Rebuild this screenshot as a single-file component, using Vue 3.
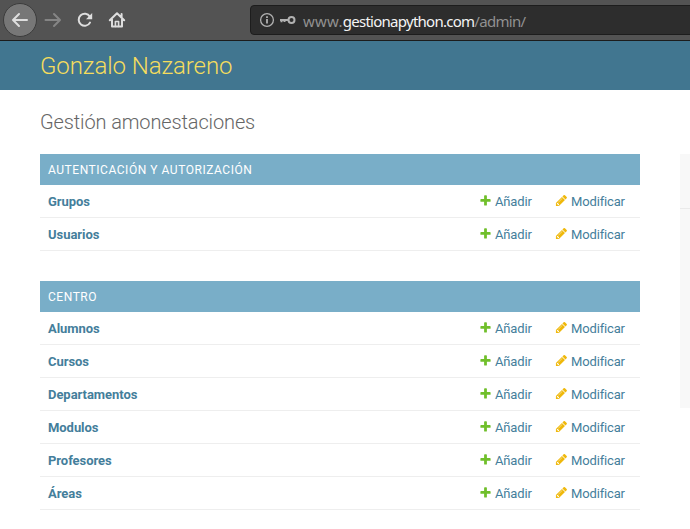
<script setup>
const apps = [
  { name: 'Autenticación y autorización', models: ['Grupos', 'Usuarios'] },
  { name: 'Centro', models: ['Alumnos', 'Cursos', 'Departamentos', 'Modulos', 'Profesores', 'Áreas'] },
]
</script>

<template>
  <div class="window">
    <nav class="toolbar">
      <button class="tool back" aria-label="Atrás">
        <svg width="20" height="20" viewBox="0 0 20 20"><path d="M17 10H3.500M9 4L3 10l6 6" /></svg>
      </button>
      <button class="tool forward" aria-label="Adelante">
        <svg width="20" height="20" viewBox="0 0 20 20"><path d="M2.500 10h14M11 4l6 6-6 6" /></svg>
      </button>
      <button class="tool reload" aria-label="Recargar">
        <svg width="20" height="20" viewBox="0 0 20 20"><path d="M15 12.600A6 6 0 1 1 14.800 6.600" /><path class="tip" d="M17.200 3v6.200h-6.200z" /></svg>
      </button>
      <button class="tool home" aria-label="Inicio">
        <svg width="20" height="20" viewBox="0 0 20 20">
          <path d="M2.800 10.200L10 3.200l7.200 7M5 9.500v7h10v-7M14.600 4v3" />
          <path class="door" d="M8.400 16.500v-5h3.200v5" />
        </svg>
      </button>
      <div class="address">
        <svg class="info" width="16" height="16" viewBox="0 0 16 16">
          <circle cx="8" cy="8" r="6.400" /><path class="stem" d="M8 7v4.500M8 4.200v1.700" />
        </svg>
        <svg class="key" width="17" height="12" viewBox="0 0 17 12">
          <circle cx="12.500" cy="6" r="3" /><path d="M9.500 6H1M2.500 6v2.200M5.500 6v2" />
        </svg>
        <span class="url"><span class="sub">www.</span><b>gestionapython.com</b>/admin/</span>
      </div>
    </nav>
    <header class="header">Gonzalo Nazareno</header>
    <main class="content">
      <h1>Gestión amonestaciones</h1>
      <div class="columns">
        <div class="apps">
          <section v-for="app in apps" :key="app.name" class="module">
            <h2>{{ app.name }}</h2>
            <div v-for="model in app.models" :key="model" class="row">
              <a class="model">{{ model }}</a>
              <a class="add">
                <svg width="13" height="13" viewBox="0 0 1792 1792"><path fill="#70bf2b" d="M1600 796v192q0 40-28 68t-68 28h-416v416q0 40-28 68t-68 28h-192q-40 0-68-28t-28-68v-416h-416q-40 0-68-28t-28-68v-192q0-40 28-68t68-28h416v-416q0-40 28-68t68-28h192q40 0 68 28t28 68v416h416q40 0 68 28t28 68z" /></svg>
                Añadir
              </a>
              <a class="change">
                <svg width="13" height="13" viewBox="0 0 1792 1792"><path fill="#efb80b" d="M491 1536l91-91-235-235-91 91v107h128v128h107zm523-928q0-22-22-22-10 0-17 7l-542 542q-7 7-7 17 0 22 22 22 10 0 17-7l542-542q7-7 7-17zm-54-192l416 416-832 832h-416v-416zm683 96q0 53-37 90l-166 166-416-416 166-165q36-38 90-38 53 0 91 38l235 234q37 39 37 91z" /></svg>
                Modificar
              </a>
            </div>
          </section>
        </div>
        <aside class="recent"><div class="recent-head"></div></aside>
      </div>
    </main>
  </div>
</template>

<style>
body { background: #fff; overflow: hidden; }
</style>

<style scoped>
.window {
  width: 690px;
  height: 529px;
  overflow: hidden;
  font-family: Roboto, "Liberation Sans", sans-serif;
  background: #fff;
}
.toolbar {
  box-sizing: border-box;
  height: 41px;
  display: flex;
  align-items: center;
  padding-left: 3px;
  background: #535353;
  border-bottom: 1px solid #1c1c1c;
}
.tool {
  box-sizing: border-box;
  flex: none;
  display: flex;
  align-items: center;
  justify-content: center;
  width: 32px;
  height: 32px;
  padding: 0;
  border: 0;
  background: none;
}
.tool svg { fill: none; stroke: #dedede; stroke-width: 2; stroke-linecap: round; stroke-linejoin: round; }
.back {
  width: 34px;
  height: 34px;
  border: 1px solid #3c3c3c;
  border-radius: 50%;
  background: #777;
}
.forward svg { stroke: #858585; }
.tool .tip { fill: #dedede; stroke: none; }
.tool .door { stroke-width: 1.600; }
.address {
  box-sizing: border-box;
  flex: none;
  width: 470px;
  height: 30px;
  margin-left: 117px;
  padding-left: 8px;
  display: flex;
  align-items: center;
  border: 1px solid #1d1d1d;
  border-radius: 4px;
  background: #2d2d2d;
}
.info { fill: none; stroke: #b1b1b1; stroke-width: 1.300; }
.stem { stroke-width: 1.800; }
.key { margin-left: 4px; fill: none; stroke: #b1b1b1; stroke-width: 2; }
.url {
  margin-left: 7px;
  padding-top: 1px;
  font: 15px/20px "Noto Sans", sans-serif;
  letter-spacing: -0.700px;
  color: #919191;
  white-space: nowrap;
}
.sub { letter-spacing: 0.250px; }
.url b { font-weight: 400; letter-spacing: -0.740px; color: #f4f4f4; }
.header {
  height: 49px;
  padding-left: 40px;
  font-size: 24px;
  font-weight: 300;
  line-height: 50px;
  letter-spacing: -0.080px;
  color: #f5dd5d;
  background: #417690;
}
.content { padding: 20px 0 0 40px; }
h1 {
  margin: 0 0 20px;
  font-size: 20px;
  font-weight: 300;
  line-height: 24px;
  letter-spacing: -0.130px;
  color: #666;
}
.columns { display: flex; gap: 40px; align-items: flex-start; }
.apps { flex: none; width: 600px; }
.module { margin-bottom: 30px; }
h2 {
  box-sizing: border-box;
  height: 31px;
  margin: 0;
  padding: 9px 8px 7px;
  font-size: 12px;
  font-weight: 400;
  line-height: 15px;
  letter-spacing: 0.540px;
  text-transform: uppercase;
  color: #fff;
  background: #79aec8;
}
.row {
  box-sizing: border-box;
  height: 33px;
  display: grid;
  grid-template-columns: 431px 76px 1fr;
  align-items: center;
  padding: 2px 0 0 8px;
  border-bottom: 1px solid #eee;
  font-size: 13px;
  line-height: 16px;
  color: #447e9b;
}
.model { font-weight: 700; letter-spacing: -0.050px; }
.add, .change { display: flex; gap: 3px; letter-spacing: -0.150px; }
.add svg, .change svg { flex: none; }
.recent { flex: none; width: 10px; height: 254px; background: #f8f8f8; }
.recent-head { height: 54px; border-bottom: 1px solid #eaeaea; }
</style>
